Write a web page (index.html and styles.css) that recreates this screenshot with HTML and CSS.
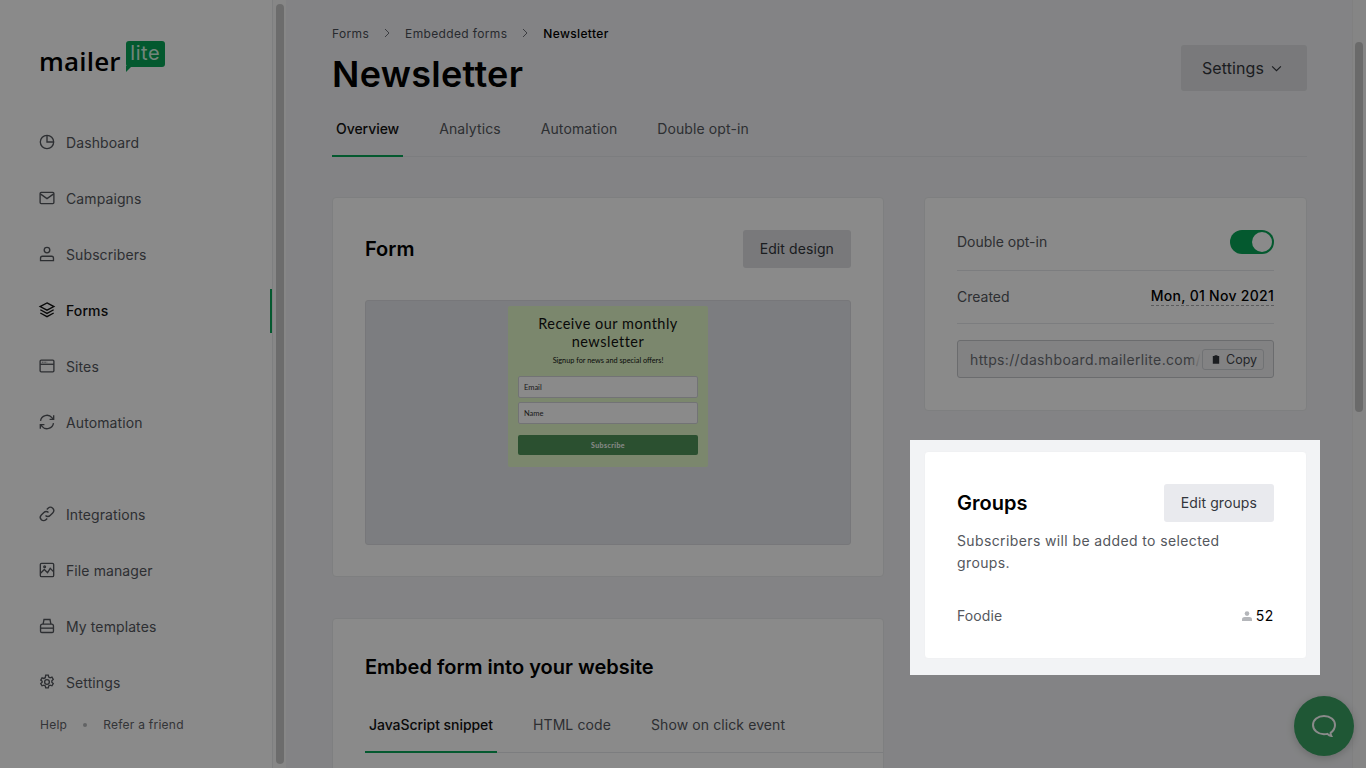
FILE: index.html
```html
<!DOCTYPE html>
<html lang="en">
<head>
  <meta charset="UTF-8">
  <title>Newsletter - MailerLite</title>
  <link rel="stylesheet" href="styles.css">
</head>
<body>
  <div class="overlay"></div>

  <aside class="sidebar">
    <div class="logo">
      <span class="logo-word">mailer</span>
      <span class="logo-badge">lite</span>
    </div>
    <nav class="nav">
      <a class="nav-item">
        <svg class="nav-icon" viewBox="1.5 1.5 13 13"><circle cx="8" cy="8" r="6.2"/><path d="M8 1.8V8h6.2"/></svg>
        Dashboard
      </a>
      <a class="nav-item">
        <svg class="nav-icon" viewBox="1.5 1.5 13 13"><rect x="1.6" y="2.8" width="12.8" height="10.4" rx="1"/><path d="M1.8 4.2 8 8.6l6.2-4.4"/></svg>
        Campaigns
      </a>
      <a class="nav-item">
        <svg class="nav-icon" viewBox="1.5 1.5 13 13"><circle cx="8" cy="4.4" r="2.6"/><path d="M2 14.2v-2.4c0-1 .7-1.7 1.7-1.7h8.6c1 0 1.7.7 1.7 1.7v2.4z"/></svg>
        Subscribers
      </a>
      <a class="nav-item active">
        <svg class="nav-icon" viewBox="1.5 1.5 13 13"><path d="M8 1.4 14.4 4.8 8 8.2 1.6 4.8z"/><path d="M1.8 7.8 8 11.2l6.2-3.4"/><path d="M1.8 10.8 8 14.2l6.2-3.4"/></svg>
        Forms
      </a>
      <a class="nav-item">
        <svg class="nav-icon" viewBox="1.5 1.5 13 13"><rect x="1.6" y="2.6" width="12.8" height="10.8" rx="1"/><path d="M1.6 6.4h12.8"/><path class="icon-thin" d="M3.2 4.5h5"/></svg>
        Sites
      </a>
      <a class="nav-item">
        <svg class="nav-icon" viewBox="1.5 1.5 13 13"><path d="M2 7a6 6 0 0 1 10.6-3L14.2 5.6"/><path d="M14.2 1.8v3.8h-3.8"/><path d="M14 9a6 6 0 0 1-10.6 3L1.8 10.4"/><path d="M1.8 14.2v-3.8h3.8"/></svg>
        Automation
      </a>
    </nav>
    <nav class="nav nav-lower">
      <a class="nav-item">
        <svg class="nav-icon" viewBox="1.5 1.5 13 13"><path d="M6.6 9.4a3 3 0 0 0 4.3 0l2.4-2.4a3 3 0 0 0-4.3-4.3L7.8 3.9"/><path d="M9.4 6.6a3 3 0 0 0-4.3 0L2.7 9a3 3 0 0 0 4.3 4.3l1.2-1.2"/></svg>
        Integrations
      </a>
      <a class="nav-item">
        <svg class="nav-icon" viewBox="1.5 1.5 13 13"><rect x="1.8" y="1.8" width="12.4" height="12.4" rx="1.2"/><path d="M2 11l3.500-3.500 3 3 2.500-4 3 3"/><circle cx="5.800" cy="5" r=".8"/></svg>
        File manager
      </a>
      <a class="nav-item">
        <svg class="nav-icon" viewBox="1.5 1.5 13 13"><path d="M4.4 6.2 5.200 2h5.600l.8 4.200"/><path d="M2 8c0-1 .8-1.800 1.800-1.800h8.400c1 0 1.800.8 1.800 1.800v4.800c0 .6-.5 1.200-1.200 1.200H3.200c-.7 0-1.200-.6-1.200-1.200z"/><path d="M2 10h12"/></svg>
        My templates
      </a>
      <a class="nav-item">
        <svg class="nav-icon" viewBox="1.5 1.5 13 13"><circle cx="8" cy="8" r="2.2"/><path d="M6.800 1.600h2.400l.4 1.800 1.300.7 1.700-.6 1.200 2.100-1.300 1.200v1.400l1.300 1.200-1.200 2.100-1.700-.6-1.300.7-.4 1.800H6.800l-.4-1.800-1.300-.7-1.700.6-1.200-2.100 1.300-1.200V7.400L2.200 6.200l1.200-2.100 1.700.6 1.300-.7z"/></svg>
        Settings
      </a>
    </nav>
    <div class="side-foot">
      <span>Help</span>
      <span class="foot-dot"></span>
      <span>Refer a friend</span>
    </div>
  </aside>
  <div class="side-scroll"><div class="side-thumb"></div></div>

  <main class="main">
    <div class="crumbs">
      <span>Forms</span>
      <svg class="crumb-sep" viewBox="0 0 8 10"><path d="M2 1l4 4-4 4"/></svg>
      <span>Embedded forms</span>
      <svg class="crumb-sep" viewBox="0 0 8 10"><path d="M2 1l4 4-4 4"/></svg>
      <span class="crumb-current">Newsletter</span>
    </div>

    <div class="page-head">
      <h1 class="page-title">Newsletter</h1>
      <button class="btn btn-settings">Settings
        <svg class="chev" viewBox="0 0 12 8"><path d="M1 1.500l5 5 5-5"/></svg>
      </button>
    </div>

    <div class="tabs">
      <a class="tab active">Overview</a>
      <a class="tab">Analytics</a>
      <a class="tab">Automation</a>
      <a class="tab">Double opt-in</a>
    </div>

    <div class="columns">
      <div class="col-left">
        <section class="card form-card">
          <div class="card-head">
            <h2 class="card-title">Form</h2>
            <button class="btn">Edit design</button>
          </div>
          <div class="preview">
            <div class="mini-form">
              <div class="mini-title">Receive our monthly newsletter</div>
              <div class="mini-sub">Signup for news and special offers!</div>
              <div class="mini-input">Email</div>
              <div class="mini-input">Name</div>
              <div class="mini-btn">Subscribe</div>
            </div>
          </div>
        </section>

        <section class="card embed-card">
          <h2 class="card-title">Embed form into your website</h2>
          <div class="tabs embed-tabs">
            <a class="tab active">JavaScript snippet</a>
            <a class="tab">HTML code</a>
            <a class="tab">Show on click event</a>
          </div>
        </section>
      </div>

      <div class="col-right">
        <section class="card info-card">
          <div class="info-row row-optin">
            <span class="optin-label">Double opt-in</span>
            <span class="toggle"><span class="toggle-knob"></span></span>
          </div>
          <div class="info-row row-created">
            <span>Created</span>
            <span class="created-date">Mon, 01 Nov 2021</span>
          </div>
          <div class="url-box">
            <span class="url-text">https://dashboard.mailerlite.com/fo</span>
            <span class="url-fade"></span>
            <button class="copy-btn">
              <svg class="copy-icon" viewBox="0 0 10 12"><path d="M3.200 1.200h3.600V2.200H9V12H1V2.200h2.200z"/></svg>
              Copy
            </button>
          </div>
        </section>

        <div class="spotlight">
          <section class="card groups-card">
            <div class="card-head groups-head">
              <h2 class="card-title">Groups</h2>
              <button class="btn">Edit groups</button>
            </div>
            <p class="groups-text">Subscribers will be added to selected groups.</p>
            <div class="group-row">
              <span>Foodie</span>
              <span class="group-count">
                <svg class="count-icon" viewBox="0 0 10 10"><circle cx="5" cy="2.600" r="2.300"/><path d="M0 10V8.200C0 6.800 1.400 6 2.600 6h4.800C8.600 6 10 6.800 10 8.200V10z"/></svg>
                52
              </span>
            </div>
          </section>
        </div>
      </div>
    </div>
  </main>

  <div class="page-scroll"><div class="page-thumb"></div></div>

  <button class="chat">
    <svg class="chat-icon" viewBox="0 0 24 22"><path d="M12 1C5.900 1 1 4.900 1 10s4.900 9.300 11 9.300c1.200 0 2.300-.1 3.400-.4.900 1 2.300 1.900 3.900 2-.5-.9-.7-1.900-.7-3C21.200 16 23 13.200 23 10c0-5.100-4.900-9-11-9z"/></svg>
  </button>
</body>
</html>
```

FILE: styles.css
```css
* {
  box-sizing: border-box;
}
body {
  margin: 0;
  height: 768px;
  overflow: hidden;
  display: flex;
  font-family: Inter, "Liberation Sans", sans-serif;
  font-size: 14px;
  letter-spacing: 0.1px;
  color: #4b4f57;
  background: #f2f3f5;
}
.overlay {
  position: fixed;
  top: 0;
  left: 0;
  width: 100%;
  height: 100%;
  background: rgba(0, 0, 0, 0.46);
  z-index: 10;
}

/* sidebar */
.sidebar {
  width: 273px;
  height: 768px;
  flex-shrink: 0;
  padding: 41px 0 0 40px;
  background: #fff;
  border-right: 1px solid #e9eaec;
}
.logo {
  display: flex;
  align-items: flex-start;
  height: 32px;
  margin-bottom: 47px;
}
.logo-word {
  font-family: "Open Sans", sans-serif;
  font-size: 26px;
  font-weight: 600;
  line-height: 32px;
  margin: 4px 0 0 -1px;
  letter-spacing: 0.2px;
  color: #000;
}
.logo-badge {
  position: relative;
  width: 39px;
  height: 26px;
  margin-left: 5px;
  border-radius: 3px;
  background: #09a557;
  color: #d5f5e3;
  font-size: 20px;
  line-height: 24px;
  letter-spacing: 0.6px;
  text-align: center;
}
.logo-badge::after {
  content: "";
  position: absolute;
  left: 0;
  top: 25px;
  border-top: 6px solid #09a557;
  border-right: 6px solid transparent;
}
.nav {
  display: flex;
  flex-direction: column;
  gap: 12px;
}
.nav-lower {
  margin-top: 48px;
}
.nav-item {
  position: relative;
  display: flex;
  align-items: center;
  gap: 12px;
  height: 44px;
  color: #54575d;
}
.nav-item.active {
  color: #111;
  font-weight: 500;
}
.nav-item.active::after {
  content: "";
  position: absolute;
  right: 0;
  top: 1px;
  width: 2px;
  height: 44px;
  background: #09a557;
}
.nav-icon {
  width: 14px;
  height: 14px;
  flex-shrink: 0;
  overflow: visible;
  fill: none;
  stroke: currentColor;
  stroke-width: 1.25;
}
.icon-thin {
  stroke-width: 0.8;
  stroke-dasharray: 1 0.6;
}
.side-foot {
  display: flex;
  align-items: center;
  gap: 16px;
  margin-top: 12px;
  font-size: 12px;
  line-height: 18px;
  letter-spacing: 0.25px;
  color: #5f6268;
}
.foot-dot {
  width: 4px;
  height: 4px;
  border-radius: 50%;
  background: #b5b7bb;
}
.side-scroll {
  width: 13px;
  height: 768px;
  flex-shrink: 0;
  padding: 4px 2px 4px 3px;
  background: #fafafa;
}
.side-thumb {
  height: 100%;
  border-radius: 5px;
  background: #c8c8c8;
}

/* main column */
.main {
  flex: 1;
  min-width: 0;
  padding: 24px 45px 0 46px;
}
.crumbs {
  display: flex;
  align-items: center;
  gap: 14px;
  height: 18px;
  font-size: 12px;
  letter-spacing: 0.35px;
  color: #4b4f57;
}
.crumb-sep {
  width: 8px;
  height: 10px;
  fill: none;
  stroke: #6f7278;
  stroke-width: 1;
}
.crumb-current {
  color: #000;
  font-weight: 500;
}
.page-head {
  display: flex;
  justify-content: space-between;
  align-items: flex-start;
  height: 65px;
  margin-top: 3px;
}
.page-title {
  margin: 0;
  font-size: 36px;
  line-height: 58px;
  font-weight: 600;
  letter-spacing: 0.3px;
  color: #000;
}
.btn {
  height: 38px;
  padding: 0 17px 2px;
  border: 0;
  border-radius: 3px;
  background: #dfe0e3;
  font-family: inherit;
  font-size: 14px;
  letter-spacing: 0.1px;
  color: #33363c;
}
.btn-settings {
  display: flex;
  align-items: center;
  gap: 7px;
  height: 46px;
  width: 126px;
  padding: 0 0 0 21px;
  font-size: 16px;
}
.chev {
  width: 11px;
  height: 7px;
  fill: none;
  stroke: currentColor;
  stroke-width: 1.3;
}
.tabs {
  display: flex;
  gap: 40px;
  height: 47px;
  padding-left: 4px;
  border-bottom: 1px solid #e6e7ea;
  color: #54575d;
}
.tab {
  position: relative;
  height: 47px;
  line-height: 38px;
}
.tab.active {
  color: #111;
  font-weight: 500;
  letter-spacing: -0.05px;
}
.tab.active::after {
  content: "";
  position: absolute;
  left: -4px;
  right: -4px;
  bottom: 0;
  height: 2px;
  background: #09a557;
}
.columns {
  display: flex;
  gap: 40px;
  margin-top: 40px;
}
.col-left {
  width: 552px;
  flex-shrink: 0;
}
.col-right {
  flex: 1;
  min-width: 0;
}

/* cards */
.card {
  padding: 32px;
  background: #fff;
  border: 1px solid #e9eaec;
  border-radius: 4px;
}
.card-head {
  display: flex;
  justify-content: space-between;
  align-items: center;
}
.card-title {
  margin: 0;
  font-size: 20px;
  line-height: 38px;
  font-weight: 600;
  letter-spacing: 0;
  color: #000;
}
.form-card {
  height: 380px;
}
.preview {
  display: flex;
  justify-content: center;
  height: 245px;
  margin-top: 32px;
  padding-top: 5px;
  background: #e6e8ec;
  border: 1px solid #dcdde1;
  border-radius: 3px;
}
.mini-form {
  width: 200px;
  height: 161px;
  padding: 9px 10px 0;
  background: #e3fac9;
  border-radius: 2px;
  font-family: Lato, sans-serif;
  letter-spacing: 0;
  text-align: center;
  color: #111;
}
.mini-title {
  font-size: 14.5px;
  line-height: 18px;
  letter-spacing: 0.5px;
}
.mini-sub {
  margin: 3px 0 8px;
  font-size: 7.3px;
  line-height: 14px;
}
.mini-input {
  height: 22px;
  margin-bottom: 4px;
  padding-left: 5px;
  background: #fff;
  border: 1px solid #d3d5d8;
  border-radius: 2px;
  font-size: 7.5px;
  line-height: 21px;
  text-align: left;
  color: #333;
}
.mini-btn {
  height: 20px;
  margin-top: 11px;
  background: #509559;
  border-radius: 2px;
  font-size: 7px;
  font-weight: 700;
  line-height: 20px;
  letter-spacing: 0.4px;
  color: #fff;
}
.embed-card {
  margin-top: 41px;
  height: 220px;
  padding: 29px 0 0 32px;
}
.embed-tabs {
  margin-top: 20px;
}
.info-card {
  height: 214px;
}
.info-row {
  display: flex;
  justify-content: space-between;
  align-items: center;
  border-bottom: 1px solid #e6e7ea;
  letter-spacing: 0;
  color: #54575d;
}
.row-optin {
  height: 41px;
  padding-bottom: 16px;
}
.optin-label {
  margin-top: -2px;
}
.row-created {
  height: 53px;
  padding-bottom: 2px;
}
.toggle {
  display: flex;
  justify-content: flex-end;
  align-items: center;
  width: 44px;
  height: 24px;
  padding-right: 2px;
  border-radius: 12px;
  background: #09a557;
}
.toggle-knob {
  width: 20px;
  height: 20px;
  border-radius: 50%;
  background: #fff;
}
.created-date {
  margin-top: 1px;
  font-weight: 500;
  color: #000;
  letter-spacing: 0.28px;
  line-height: 18px;
  border-bottom: 1px dashed #a8aaae;
}
.url-box {
  position: relative;
  display: flex;
  align-items: center;
  height: 38px;
  margin-top: 16px;
  padding-left: 12px;
  background: #f0f1f3;
  border: 1px solid #c6c8cc;
  border-radius: 3px;
  color: #6b6e74;
  white-space: nowrap;
}
.url-text {
  flex: 1;
  min-width: 0;
  overflow: hidden;
  letter-spacing: 0.35px;
}
.url-fade {
  position: absolute;
  right: 72px;
  top: 0;
  width: 12px;
  height: 36px;
  background: linear-gradient(90deg, rgba(240, 241, 243, 0), #f0f1f3);
}
.copy-btn {
  display: flex;
  align-items: center;
  flex-shrink: 0;
  gap: 6px;
  width: 62px;
  height: 21px;
  margin: 0 9px 0 2px;
  padding: 0 0 0 9px;
  background: #f0f1f3;
  border: 1px solid #d0d2d6;
  border-radius: 3px;
  font-family: inherit;
  font-size: 12.5px;
  color: #44474d;
}
.copy-icon {
  width: 8px;
  height: 10px;
  flex-shrink: 0;
  fill: #33363c;
}

/* the group card sits over the dark layer */
.spotlight {
  position: relative;
  z-index: 20;
  margin: 29px -13px 0 -14px;
  padding: 11px 13px 16px 14px;
  background: #f2f3f5;
}
.groups-card {
  height: 208px;
  border-color: #f0f1f3;
}
.groups-card .btn {
  background: #e9eaee;
}
.groups-text {
  margin: 8px 0 0;
  line-height: 22px;
  letter-spacing: 0.38px;
  color: #54575d;
}
.group-row {
  display: flex;
  justify-content: space-between;
  align-items: center;
  margin-top: 31px;
  line-height: 22px;
  color: #54575d;
}
.group-count {
  display: flex;
  align-items: center;
  gap: 4px;
  color: #000;
  letter-spacing: 0.6px;
}
.count-icon {
  width: 10px;
  height: 10px;
  fill: #b4b6ba;
}

/* fake scrollbar and chat button */
.page-scroll {
  width: 14px;
  height: 768px;
  flex-shrink: 0;
  padding: 42px 3px 0 2px;
  background: #f5f5f6;
  border-left: 1px solid #eceded;
}
.page-thumb {
  height: 370px;
  border-radius: 5px;
  background: #c4c4c4;
}
.chat {
  position: fixed;
  right: 12px;
  bottom: 12px;
  z-index: 5;
  display: flex;
  align-items: center;
  justify-content: center;
  width: 60px;
  height: 60px;
  padding: 0;
  border: 0;
  border-radius: 50%;
  background: #3aa163;
  box-shadow: 0 2px 8px rgba(0, 0, 0, 0.2);
}
.chat-icon {
  width: 24px;
  height: 22px;
  overflow: visible;
  fill: none;
  stroke: #fff;
  stroke-width: 2;
}
```
